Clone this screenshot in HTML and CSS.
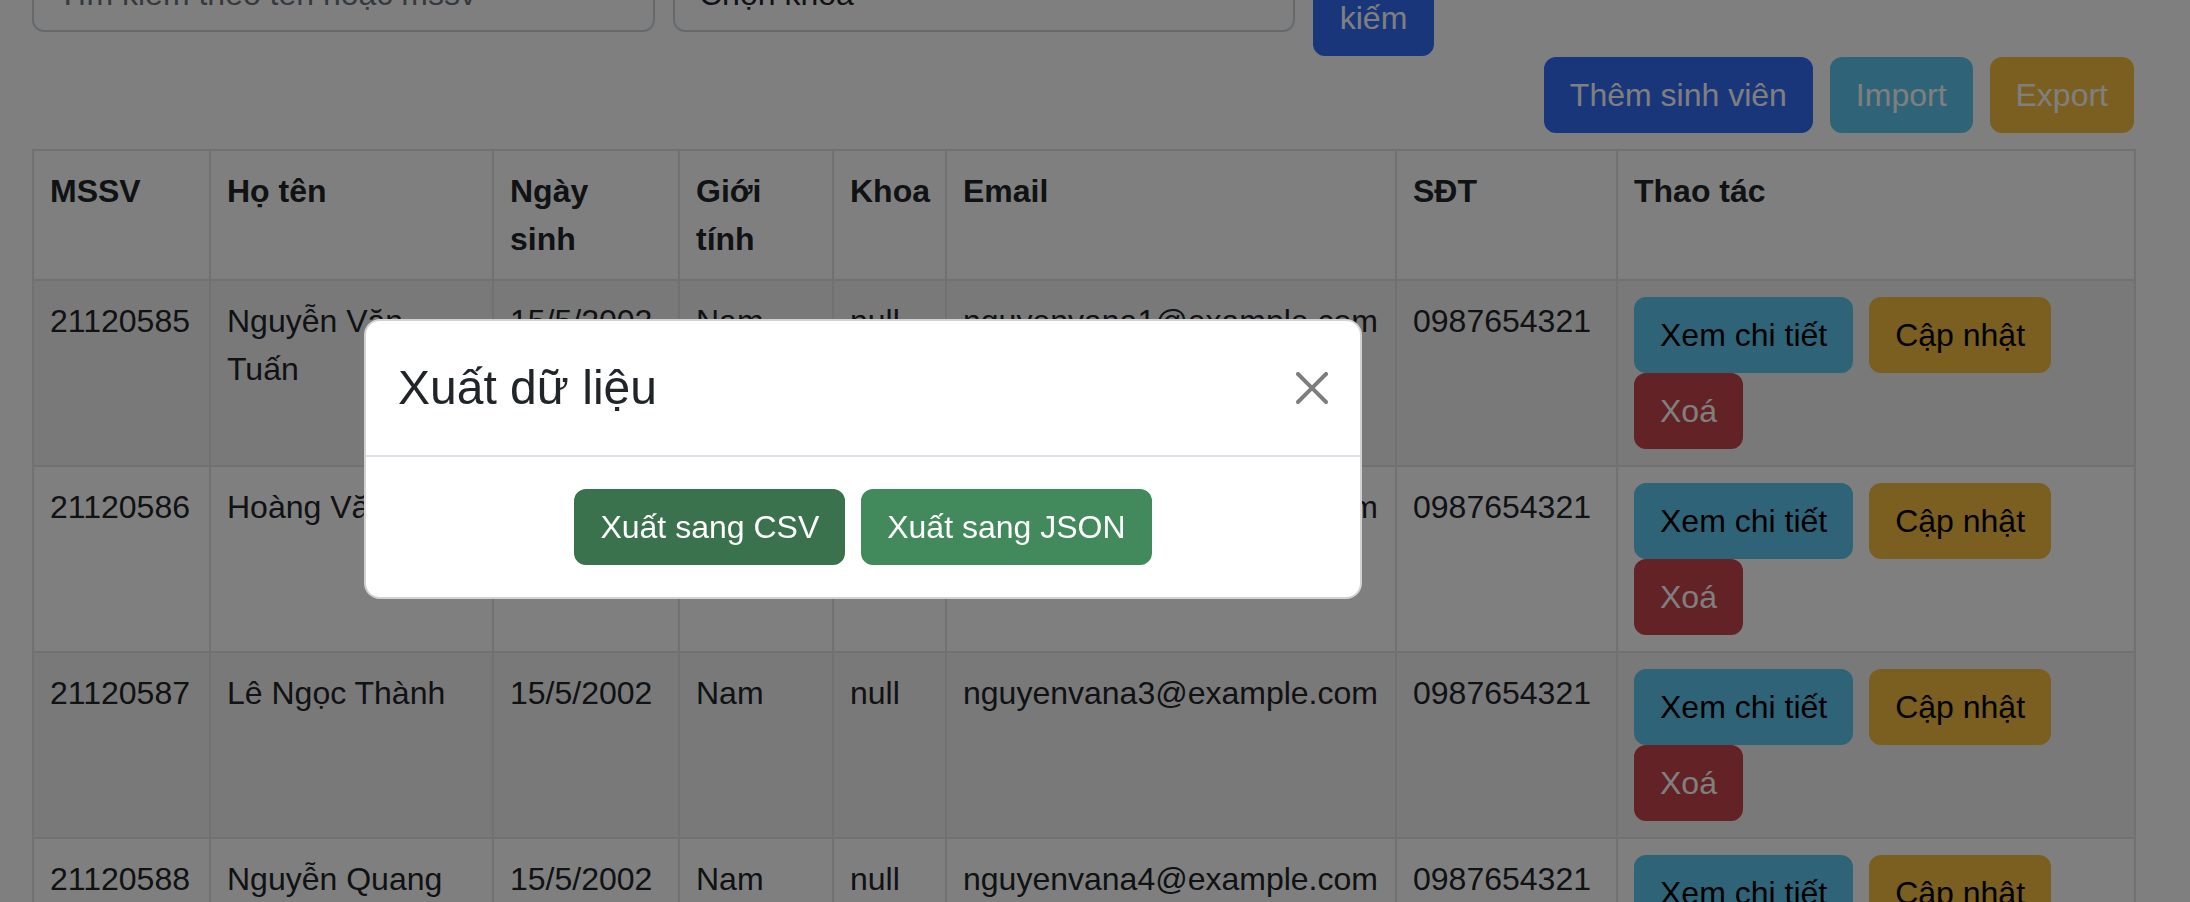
FILE: index.html
```html
<!DOCTYPE html>
<html lang="vi">
<head>
<meta charset="utf-8">
<title>Quản lý sinh viên</title>
<link rel="stylesheet" href="styles.css">
</head>
<body>
<div class="page">
  <form class="search-row">
    <input class="form-control search-input" type="text" placeholder="Tìm kiếm theo tên hoặc mssv">
    <select class="form-control form-select"><option>Chọn khoa</option></select>
    <button type="button" class="btn btn-primary btn-search">Tìm kiếm</button>
  </form>

  <div class="toolbar">
    <button type="button" class="btn btn-primary">Thêm sinh viên</button>
    <button type="button" class="btn btn-info text-white">Import</button>
    <button type="button" class="btn btn-warning text-white">Export</button>
  </div>

  <table class="table">
    <colgroup>
      <col class="c-mssv"><col class="c-name"><col class="c-date"><col class="c-sex">
      <col class="c-khoa"><col class="c-email"><col class="c-phone"><col class="c-act">
    </colgroup>
    <thead>
      <tr><th>MSSV</th><th>Họ tên</th><th>Ngày sinh</th><th>Giới tính</th><th>Khoa</th><th>Email</th><th>SĐT</th><th>Thao tác</th></tr>
    </thead>
    <tbody>
      <tr class="odd">
        <td>21120585</td><td>Nguyễn Văn Tuấn</td><td>15/5/2002</td><td>Nam</td><td>null</td><td>nguyenvana1@example.com</td><td>0987654321</td>
        <td><div class="actions"><button type="button" class="btn btn-info">Xem chi tiết</button><button type="button" class="btn btn-warning">Cập nhật</button><button type="button" class="btn btn-danger">Xoá</button></div></td>
      </tr>
      <tr>
        <td>21120586</td><td>Hoàng Văn Nam</td><td>15/5/2002</td><td>Nam</td><td>null</td><td>nguyenvana2@example.com</td><td>0987654321</td>
        <td><div class="actions"><button type="button" class="btn btn-info">Xem chi tiết</button><button type="button" class="btn btn-warning">Cập nhật</button><button type="button" class="btn btn-danger">Xoá</button></div></td>
      </tr>
      <tr class="odd">
        <td>21120587</td><td>Lê Ngọc Thành</td><td>15/5/2002</td><td>Nam</td><td>null</td><td>nguyenvana3@example.com</td><td>0987654321</td>
        <td><div class="actions"><button type="button" class="btn btn-info">Xem chi tiết</button><button type="button" class="btn btn-warning">Cập nhật</button><button type="button" class="btn btn-danger">Xoá</button></div></td>
      </tr>
      <tr>
        <td>21120588</td><td>Nguyễn Quang Huy</td><td>15/5/2002</td><td>Nam</td><td>null</td><td>nguyenvana4@example.com</td><td>0987654321</td>
        <td><div class="actions"><button type="button" class="btn btn-info">Xem chi tiết</button><button type="button" class="btn btn-warning">Cập nhật</button><button type="button" class="btn btn-danger">Xoá</button></div></td>
      </tr>
    </tbody>
  </table>
</div>

<div class="backdrop"></div>

<div class="modal" role="dialog" aria-labelledby="exportTitle">
  <div class="modal-content">
    <div class="modal-header">
      <h4 class="modal-title" id="exportTitle">Xuất dữ liệu</h4>
      <button type="button" class="btn-close" aria-label="Close">
        <svg viewBox="0 0 16 16" width="32" height="32" aria-hidden="true"><path d="M.293.293a1 1 0 0 1 1.414 0L8 6.586 14.293.293a1 1 0 1 1 1.414 1.414L9.414 8l6.293 6.293a1 1 0 0 1-1.414 1.414L8 9.414l-6.293 6.293a1 1 0 0 1-1.414-1.414L6.586 8 .293 1.707a1 1 0 0 1 0-1.414z"/></svg>
      </button>
    </div>
    <div class="modal-body">
      <button type="button" class="btn btn-success btn-success-active">Xuất sang CSV</button>
      <button type="button" class="btn btn-success">Xuất sang JSON</button>
    </div>
  </div>
</div>
</body>
</html>
```

FILE: styles.css
```css
* { box-sizing: border-box; }

html, body {
  margin: 0;
  padding: 0;
  background: #ffffff;
  color: #212529;
  font-family: "Liberation Sans", Arial, sans-serif;
  font-size: 32px;
  line-height: 48px;
  overflow: hidden;
}

.page {
  padding: 0 56px 0 32px;
  margin-top: -68px;
}

/* search form */
.search-row {
  display: flex;
  align-items: center;
  gap: 18px;
  margin: 0;
}

.form-control {
  display: block;
  height: 76px;
  padding: 12px 24px;
  font-family: inherit;
  font-size: 32px;
  line-height: 48px;
  color: #212529;
  background: #ffffff;
  border: 2px solid #ced4da;
  border-radius: 12px;
  outline: none;
}

.search-input { width: 623px; }
.search-input::placeholder { color: #6c757d; }

.form-select {
  width: 622px;
  appearance: none;
  -webkit-appearance: none;
}

.btn-search {
  width: 121px;
  white-space: normal;
}

/* buttons */
.btn {
  display: inline-block;
  padding: 12px 24px;
  font-family: inherit;
  font-size: 32px;
  line-height: 48px;
  font-weight: 400;
  text-align: center;
  border: 2px solid transparent;
  border-radius: 12px;
  white-space: nowrap;
  cursor: pointer;
}

.btn-search { white-space: normal; }

.btn-primary { background: #326cf6; border-color: #326cf6; color: #ffffff; }
.btn-info { background: #5ec8f0; border-color: #5ec8f0; color: #000000; }
.btn-warning { background: #f4be40; border-color: #f4be40; color: #000000; }
.btn-danger { background: #c6444a; border-color: #c6444a; color: #ffffff; }
.btn-success { background: #428a5b; border-color: #428a5b; color: #ffffff; }
.btn-success-active { background: #3a724e; border-color: #3a724e; }
.text-white { color: #ffffff; }

.toolbar {
  display: flex;
  justify-content: flex-end;
  gap: 17px;
  margin: 1px 0 16px;
}

/* table */
.table {
  width: 2102px;
  table-layout: fixed;
  border-collapse: collapse;
  border: 2px solid #dee2e6;
}

.c-mssv { width: 177px; }
.c-name { width: 283px; }
.c-date { width: 186px; }
.c-sex { width: 154px; }
.c-khoa { width: 113px; }
.c-email { width: 450px; }
.c-phone { width: 221px; }
.c-act { width: 518px; }

.table th,
.table td {
  padding: 16px;
  border: 2px solid #dee2e6;
  vertical-align: top;
  text-align: left;
}

.table th { font-weight: 700; }

.table tr.odd td { background: #f2f2f2; }

.actions {
  display: flex;
  flex-wrap: wrap;
  column-gap: 16px;
  row-gap: 0;
}

/* modal */
.backdrop {
  position: fixed;
  inset: 0;
  background: rgba(0, 0, 0, 0.5);
  z-index: 1050;
}

.modal {
  position: fixed;
  top: 319px;
  left: 364px;
  width: 998px;
  z-index: 1055;
}

.modal-content {
  background: #ffffff;
  border: 2px solid rgba(0, 0, 0, 0.175);
  border-radius: 16px;
  overflow: hidden;
}

.modal-header {
  display: flex;
  align-items: center;
  padding: 31px 32px;
  border-bottom: 2px solid #dee2e6;
}

.modal-title {
  margin: 0;
  font-size: 48px;
  line-height: 72px;
  font-weight: 500;
  color: #212529;
}

.btn-close {
  width: 64px;
  height: 64px;
  padding: 16px;
  margin: -16px -16px -16px auto;
  background: transparent;
  border: 0;
  opacity: 0.5;
  cursor: pointer;
}

.btn-close svg {
  display: block;
  width: 32px;
  height: 32px;
  fill: #000000;
}

.modal-body {
  display: flex;
  justify-content: center;
  gap: 16px;
  padding: 32px;
}
```
